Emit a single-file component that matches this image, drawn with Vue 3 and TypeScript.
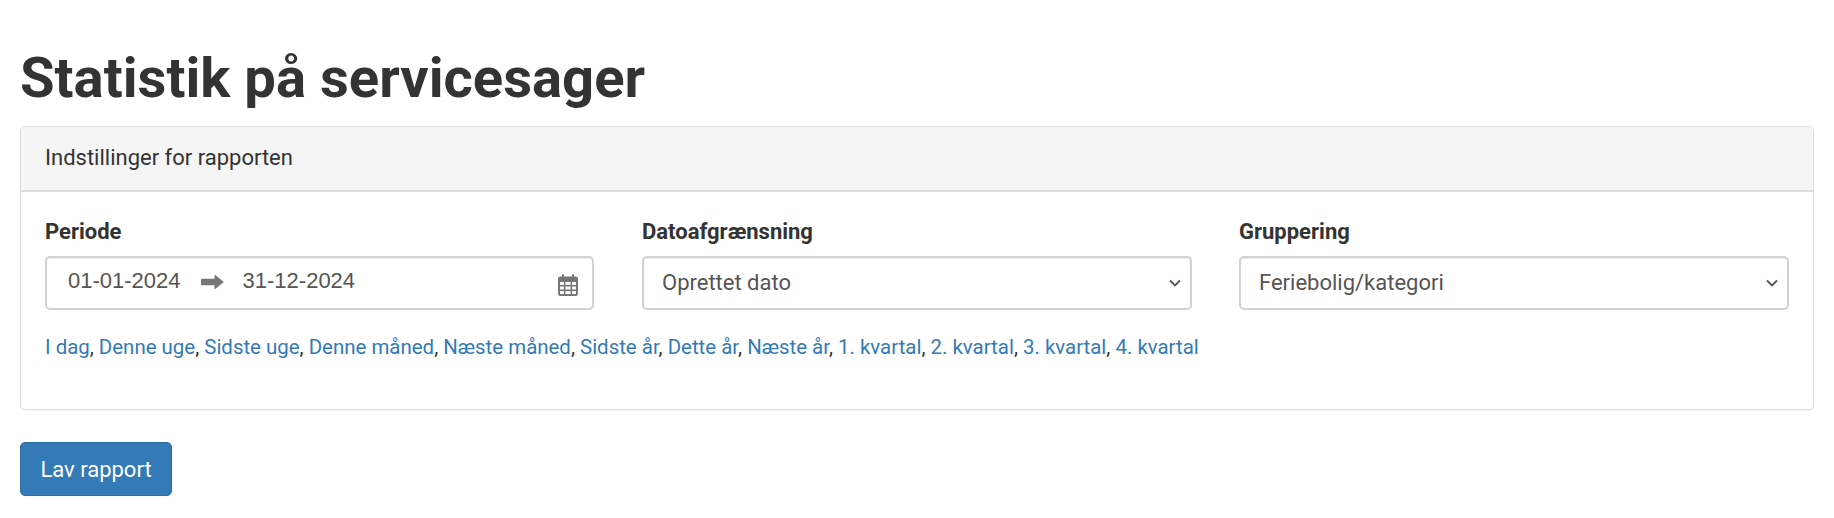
<script setup lang="ts">
const links: string[] = ['I dag','Denne uge','Sidste uge','Denne måned','Næste måned','Sidste år','Dette år','Næste år','1. kvartal','2. kvartal','3. kvartal','4. kvartal']
</script>

<template>
  <main class="page">
    <h1 class="title">Statistik på servicesager</h1>
    <section class="panel">
      <header class="panel-head">Indstillinger for rapporten</header>
      <div class="panel-body">
        <div class="grid">
          <div class="field">
            <label class="label">Periode</label>
            <div class="control date">
              <span class="date-text">01-01-2024</span>
              <svg class="arrow" viewBox="0 0 23 14" width="23" height="14"><path d="M1 3.800h12.500V0.500a0.500 0.500 0 0 1 0.800-0.400l8 6.400a0.600 0.600 0 0 1 0 1l-8 6.400a0.500 0.500 0 0 1-0.800-0.400V10.200H1a1 1 0 0 1-1-1V4.800a1 1 0 0 1 1-1z" fill="#777"/></svg>
              <span class="date-text">31-12-2024</span>
              <svg class="cal" viewBox="0 0 20 22" width="20" height="22">
                <path fill="#777" fill-rule="evenodd" d="M3 2.5h1V1a1 1 0 0 1 2 0v1.500h8V1a1 1 0 0 1 2 0v1.500h1.500A2.500 2.500 0 0 1 20 5v14.500a2.500 2.500 0 0 1-2.500 2.500h-15A2.500 2.500 0 0 1 0 19.500V5a2.500 2.500 0 0 1 2.500-2.500zM2 8v3h4V8zm5.500 0v3h5V8zM14 8v3h4V8zM2 12.500v3h4v-3zm5.500 0v3h5v-3zm6.500 0v3h4v-3zM2 17v3h4v-3zm5.500 0v3h5v-3zm6.500 0v3h4v-3z"/>
              </svg>
            </div>
          </div>
          <div class="field">
            <label class="label">Datoafgrænsning</label>
            <div class="control select-wrap">
              <span>Oprettet dato</span>
              <svg class="chev" viewBox="0 0 12 8" width="12" height="8"><path d="M1 1.500l5 5 5-5" fill="none" stroke="#555" stroke-width="1.800"/></svg>
            </div>
          </div>
          <div class="field">
            <label class="label">Gruppering</label>
            <div class="control select-wrap">
              <span>Feriebolig/kategori</span>
              <svg class="chev" viewBox="0 0 12 8" width="12" height="8"><path d="M1 1.500l5 5 5-5" fill="none" stroke="#555" stroke-width="1.800"/></svg>
            </div>
          </div>
        </div>
        <p class="links">
          <template v-for="(l, i) in links" :key="l"><a href="#" class="link">{{ l }}</a><span v-if="i < links.length - 1">, </span></template>
        </p>
      </div>
    </section>
    <button class="btn" type="button">Lav rapport</button>
  </main>
</template>

<style>
html, body { margin: 0; background: #fff; }
</style>

<style scoped>
.page {
  padding: 0 20px 0 20px;
  font-family: Roboto, "Liberation Sans", sans-serif;
  font-size: 22px;
  color: #333;
}
.title {
  margin: 0;
  padding-top: 44px;
  height: 82px;
  font-size: 56.2px;
  line-height: 68px;
  font-weight: 700;
  color: #333;
  box-sizing: content-box;
}
.panel {
  border: 1px solid #ddd;
  border-radius: 5px;
  background: #fff;
  box-shadow: 0 1px 1px rgba(0,0,0,.05);
  height: 284px;
  box-sizing: border-box;
}
.panel-head {
  height: 65px;
  box-sizing: border-box;
  background: #f5f5f5;
  border-bottom: 2px solid #ddd;
  padding: 0 24px;
  line-height: 62px;
  border-radius: 4px 4px 0 0;
}
.panel-body { padding: 26px 24px 0; }
.grid {
  display: grid;
  grid-template-columns: repeat(3, 1fr);
  gap: 47px;
}
.label {
  display: block;
  font-weight: 700;
  line-height: 28px;
  margin-bottom: 10px;
}
.control {
  height: 54px;
  box-sizing: border-box;
  border: 2px solid #d2d2d2;
  border-radius: 5px;
  box-shadow: inset 0 1px 1px rgba(0,0,0,.075);
  color: #555;
  display: flex;
  align-items: center;
  font-size: 22px;
}
.control > span { position: relative; top: -1px; }
.date { padding-left: 21px; margin-right: 1px; }
.date-text { font-family: "Liberation Sans", Arial, sans-serif; font-size: 22px; }
.date > .date-text { top: -2px; }
.arrow { margin: 0 19px 0 20px; position: relative; top: -1px; }
.cal { margin-left: auto; margin-right: 14px; position: relative; top: 2px; }
.select-wrap { padding-left: 18px; padding-right: 9px; justify-content: space-between; }
.links { margin: 23px 0 0; line-height: 28px; font-size: 20.45px; }
.link { color: #337ab7; text-decoration: none; }
.btn {
  display: block;
  margin-top: 32px;
  width: 152px;
  height: 54px;
  background: #337ab7;
  border: 1px solid #2e6da4;
  border-radius: 5px;
  color: #fff;
  font-family: inherit;
  font-size: 22px;
  padding: 0;
}
</style>
